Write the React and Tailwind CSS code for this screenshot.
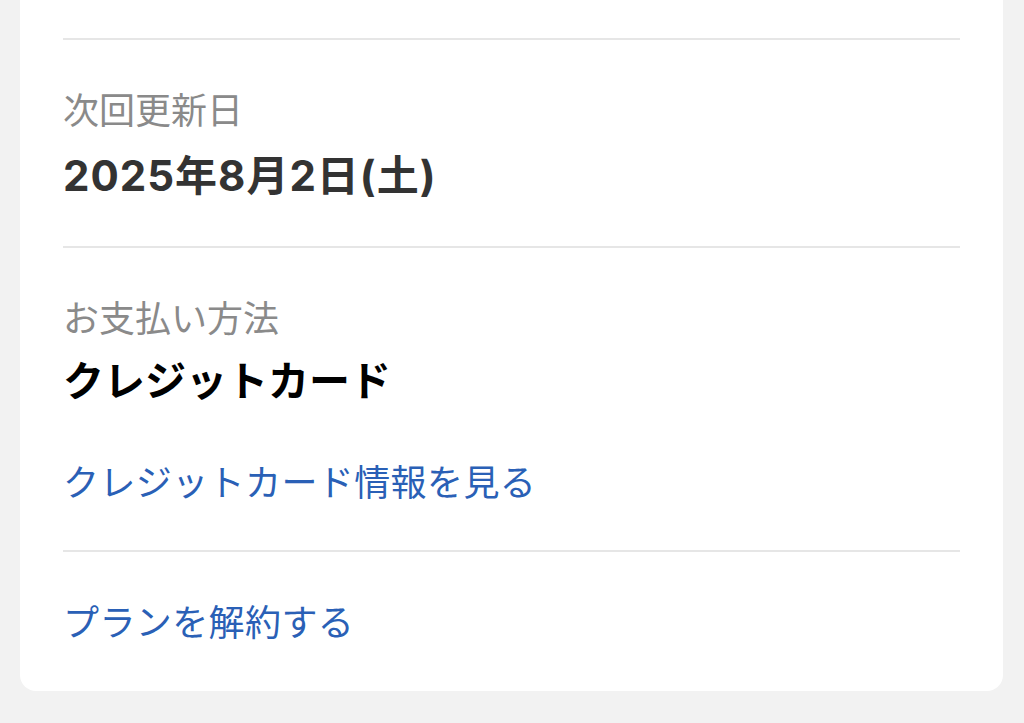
export default function App() {
  const font = { fontFamily: '"Inter", "Noto Sans CJK JP", sans-serif' };

  return (
    <div className="min-h-screen w-full bg-[#f2f2f2]" style={font}>
      <div className="ml-[20px] mr-[21px] rounded-b-[16px] bg-white px-[43px] pt-[38px] pb-[44px]">
        <div className="h-[2px] bg-[#e6e6e6]" />

        <div className="pt-[47px] pb-[42px]">
          <p className="text-[36px] leading-[48px] text-[#8a8a8a]">次回更新日</p>
          <p className="mt-[13px] text-[42px] leading-[56px] font-bold tracking-[1px] text-[#333333]">
            2025年8月2日(土)
          </p>
        </div>

        <div className="h-[2px] bg-[#e6e6e6]" />

        <div className="pt-[47px] pb-[43px]">
          <p className="text-[36px] leading-[48px] text-[#8a8a8a]">お支払い方法</p>
          <p className="mt-[10px] text-[41px] leading-[56px] font-bold text-black">
            クレジットカード
          </p>
          <a className="mt-[50px] block text-[36px] leading-[48px] tracking-[0.4px] text-[#2a60b6]">
            クレジットカード情報を見る
          </a>
        </div>

        <div className="h-[2px] bg-[#e6e6e6]" />

        <div className="pt-[47px]">
          <a className="block text-[36px] leading-[48px] tracking-[0.4px] text-[#2a60b6]">
            プランを解約する
          </a>
        </div>
      </div>
    </div>
  );
}
